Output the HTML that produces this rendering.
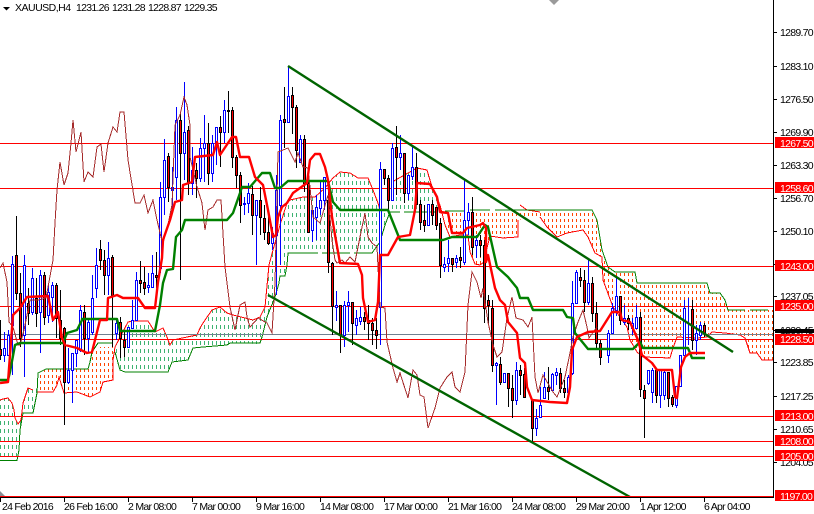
<!DOCTYPE html>
<html><head><meta charset="utf-8"><title>XAUUSD,H4</title>
<style>
html,body{margin:0;padding:0;background:#fff;width:814px;height:514px;overflow:hidden}
svg{display:block}
text{font-family:"Liberation Sans",sans-serif;font-size:10.5px;letter-spacing:-.72px;fill:#000}
.w{fill:#fff}
</style></head><body>
<svg width="814" height="514" viewBox="0 0 814 514" xmlns="http://www.w3.org/2000/svg">
<defs>
<pattern id="hg" patternUnits="userSpaceOnUse" width="4" height="8"><rect x="0" y="5" width="1" height="3" fill="#3cb371" shape-rendering="crispEdges"/><rect x="0" y="0" width="1" height="1" fill="#3cb371" shape-rendering="crispEdges"/></pattern>
<pattern id="ho" patternUnits="userSpaceOnUse" width="4" height="6"><rect x="0" y="3" width="1" height="3" fill="#ff4500" shape-rendering="crispEdges"/></pattern>
</defs>
<rect width="814" height="514" fill="#fff"/>

<!-- cloud hatch -->
<g fill="url(#hg)" shape-rendering="crispEdges">
<polygon points="0,400 3,399 8,398 12,403 14,410 15,418 18,424 21,420 23,413 20,430 19,450 17,460 0,460"/>
<polygon points="23,403 28,388 33,390 37,385 38,373 37,393 33,413 23,413"/>
<polygon points="115,347 128,322 133,321 148,321 155,332 163,328 167,337 170,345 173,340 187,337 197,335 200,328 203,323 212,310 220,307 227,313 233,315 253,320 260,317 265,307 269,265 273,250 280,225 287,203 290,200 303,197 315,197 325,188 333,178 340,172 350,173 358,178 368,178 373,190 378,203 381,213 388,212 380,242 372,253 288,253 287,265 285,276 280,276 279,283 275,297 267,317 262,337 260,344 230,343 227,345 203,347 193,348 188,360 172,362 168,372 125,372 120,370 115,352"/>
<polygon points="392,182 417,168 427,170 433,190 440,205 445,212 390,212"/>
</g>
<g fill="url(#ho)" shape-rendering="crispEdges">
<polygon points="38,373 46,369 88,369 90,362 92,352 98,347 113,347 114,380 103,382 100,392 90,397 77,392 64,393 59,377 57,385 53,392 37,392"/>
<polygon points="445,211 592,210 597,220 602,250 608,267 615,272 635,272 637,283 707,283 710,293 720,293 725,300 728,310 773,310 773,360 762,360 757,353 750,353 745,338 740,335 725,333 712,332 707,337 697,338 677,337 673,348 670,358 643,357 637,352 630,340 627,327 613,307 603,280 602,257 595,253 588,237 583,230 567,233 557,237 547,227 540,217 518,220 518,237 503,238 490,236 487,248 484,262 480,265 475,264 470,252 468,235 460,235 450,237"/>
</g>
<!-- senkou edges -->
<g fill="none" stroke="#ff0000" stroke-width="1" shape-rendering="crispEdges">
<path d="M0 400L3 399 8 398 12 403 14 410 15 418 18 424 21 420 23 403 28 388 33 390"/>
<path d="M37 392H53L57 385 59 377 64 393 77 392 90 397 100 392 103 382 113 380 113 360 115 347 128 322 133 321 148 321 155 332 163 328 167 337 170 345 173 340 187 337 197 335 200 328 203 323 212 310 220 307 227 313 233 315 253 320 260 317 265 307 269 265 273 250 280 225 287 203 290 200 303 197 315 197 325 188 333 178 340 172 350 173 358 178 368 178 373 190 378 203 381 213"/>
<path d="M392 182L417 168 427 170 433 190 440 205 445 225 450 237 460 235 468 235 470 252 475 264 480 265 484 262 487 248 490 236 503 238 518 237 518 220M520 205L527 210 540 212M540 217L547 227 557 237 567 233 583 230 588 237 595 253 602 257 603 280 613 307 627 327 630 340 637 352 643 357 670 358 673 348 677 337 697 338 707 337 712 332 725 333 740 335 745 338 750 353 757 353 762 360 773 360"/>
</g>
<g fill="none" stroke="#008000" stroke-width="1" shape-rendering="crispEdges">
<path d="M0 460.5H17L19 450 20 430 23 413H33L37 393 38 373 46 369H88L90 362 92 352 98 343H113"/>
<path d="M115 352L120 370 125 372H168L172 362 188 360 193 348 203 347 227 345 230 343H260L262 337 267 317 275 297 279 283 280 276H285L287 265 288 253H318M322 253H350M354 253H372L380 242 385 225 390 212H400M404 212H437"/>
<path d="M445 211H465M470 210H490M495 210H592L597 220 602 250 608 267 615 272H635L637 283H707L710 293H720L725 300 728 310H745M750 310H768"/>
</g>

<!-- horizontal lines -->
<g stroke="#ff0000" stroke-width="1" shape-rendering="crispEdges">
<path d="M0 143.5H773M0 188.5H773M0 266.5H773M0 306.5H773M0 339.5H773M0 416.5H773M0 441.5H773M0 456.5H773"/>
</g>
<path d="M0 334.5H773" stroke="#708090" stroke-width="1" shape-rendering="crispEdges"/>

<!-- candles -->
<g shape-rendering="crispEdges" fill="none" stroke-width="1">
<path stroke="#0000ff" d="M4.5 332V362M8.5 330V355M12.5 256V375M24.5 255V377M32.5 268V315M40.5 270V353M48.5 283V323M52.5 282V322M68.5 348V384M72.5 353V403M76.5 340V367M80.5 305V352M88.5 320V352M92.5 275V335M96.5 248V298M108.5 242V295M116.5 318V340M128.5 327V348M132.5 300V329M136.5 272V320M148.5 273V293M152.5 255V288M160.5 182V273M164.5 139V215M172.5 167V210M176.5 107V200M184.5 82V180M192.5 147V195M200.5 138V182M204.5 115V182M212.5 135V182M216.5 127V165M224.5 100V143M244.5 197V215M248.5 183V213M256.5 200V265M272.5 227V250M276.5 175V295M280.5 115V265M288.5 67V122M300.5 135V162M312.5 210V242M316.5 195V240M320.5 180V215M324.5 177V210M336.5 291V321M344.5 301V347M348.5 291V332M356.5 310V335M360.5 307V325M380.5 162V345M392.5 143V200M400.5 135V170M408.5 175V200M412.5 147V180M428.5 204V225M444.5 257V272M448.5 240V272M456.5 255V268M464.5 180V265M468.5 203V235M476.5 235V258M496.5 362V405M504.5 373V382M516.5 362V405M536.5 409V436M540.5 387V417M544.5 372V398M552.5 373V390M556.5 368V385M568.5 375V395M572.5 281V375M576.5 270V303M588.5 260V305M608.5 330V363M612.5 303V333M616.5 277V316M624.5 305V325M632.5 318V335M636.5 305V328M648.5 370V385M652.5 368V403M660.5 370V408M664.5 370V400M676.5 386V408M680.5 355V386M684.5 300V355M688.5 298V345M696.5 325V355M700.5 322V340"/>
<path stroke="#0000ff" fill="#fff" d="M3.5 348.5h2V355.5h-2zM7.5 335.5h2V355.5h-2zM11.5 264.5h2V325.5h-2zM23.5 265.5h2V335.5h-2zM31.5 278.5h2V312.5h-2zM39.5 275.5h2V312.5h-2zM47.5 292.5h2V315.5h-2zM51.5 285.5h2V297.5h-2zM67.5 370.5h2V382.5h-2zM71.5 353.5h2V370.5h-2zM75.5 340.5h2V353.5h-2zM79.5 310.5h2V350.5h-2zM87.5 322.5h2V338.5h-2zM91.5 298.5h2V332.5h-2zM95.5 265.5h2V288.5h-2zM107.5 258.5h2V275.5h-2zM115.5 323.5h2V333.5h-2zM127.5 327.5h2V347.5h-2zM131.5 320.5h2V328.5h-2zM135.5 280.5h2V320.5h-2zM147.5 285.5h2V287.5h-2zM151.5 273.5h2V287.5h-2zM159.5 197.5h2V268.5h-2zM163.5 160.5h2V197.5h-2zM171.5 187.5h2V190.5h-2zM175.5 120.5h2V177.5h-2zM183.5 132.5h2V153.5h-2zM191.5 170.5h2V183.5h-2zM199.5 148.5h2V178.5h-2zM203.5 143.5h2V148.5h-2zM211.5 143.5h2V173.5h-2zM215.5 127.5h2V143.5h-2zM223.5 110.5h2V132.5h-2zM243.5 203.5h2V204.5h-2zM247.5 193.5h2V203.5h-2zM255.5 200.5h2V215.5h-2zM271.5 233.5h2V243.5h-2zM275.5 190.5h2V235.5h-2zM279.5 120.5h2V205.5h-2zM287.5 96.5h2V122.5h-2zM299.5 139.5h2V162.5h-2zM311.5 210.5h2V230.5h-2zM315.5 207.5h2V217.5h-2zM319.5 200.5h2V208.5h-2zM323.5 177.5h2V200.5h-2zM335.5 305.5h2V307.5h-2zM343.5 305.5h2V335.5h-2zM347.5 302.5h2V305.5h-2zM355.5 318.5h2V325.5h-2zM359.5 317.5h2V321.5h-2zM379.5 169.5h2V307.5h-2zM391.5 148.5h2V200.5h-2zM399.5 153.5h2V157.5h-2zM407.5 175.5h2V193.5h-2zM411.5 167.5h2V176.5h-2zM427.5 204.5h2V225.5h-2zM443.5 264.5h2V267.5h-2zM447.5 258.5h2V263.5h-2zM455.5 258.5h2V262.5h-2zM463.5 220.5h2V262.5h-2zM467.5 212.5h2V220.5h-2zM475.5 240.5h2V245.5h-2zM495.5 363.5h2V365.5h-2zM503.5 373.5h2V382.5h-2zM515.5 370.5h2V400.5h-2zM535.5 418.5h2V428.5h-2zM539.5 405.5h2V417.5h-2zM543.5 387.5h2V398.5h-2zM551.5 374.5h2V390.5h-2zM555.5 372.5h2V375.5h-2zM567.5 377.5h2V392.5h-2zM571.5 303.5h2V373.5h-2zM575.5 272.5h2V303.5h-2zM587.5 283.5h2V302.5h-2zM607.5 333.5h2V355.5h-2zM611.5 308.5h2V333.5h-2zM615.5 296.5h2V310.5h-2zM623.5 318.5h2V322.5h-2zM631.5 323.5h2V328.5h-2zM635.5 317.5h2V328.5h-2zM647.5 370.5h2V383.5h-2zM651.5 370.5h2V392.5h-2zM659.5 370.5h2V395.5h-2zM663.5 372.5h2V395.5h-2zM675.5 386.5h2V405.5h-2zM679.5 355.5h2V386.5h-2zM683.5 308.5h2V355.5h-2zM695.5 333.5h2V340.5h-2zM699.5 325.5h2V335.5h-2z"/>
<path stroke="#000" d="M0.5 320V360M16.5 216V300M20.5 273V347M28.5 288V325M36.5 278V327M44.5 272V325M56.5 283V338M60.5 290V345M64.5 327V425M84.5 305V355M100.5 240V270M104.5 250V295M112.5 255V347M120.5 317V358M124.5 330V357M140.5 261V293M144.5 267V295M156.5 252V288M168.5 153V202M180.5 112V280M188.5 126V195M196.5 163V198M208.5 123V185M220.5 116V167M228.5 91V133M232.5 107V168M236.5 155V188M240.5 172V223M252.5 186V235M260.5 187V235M264.5 205V240M268.5 215V245M284.5 87V148M292.5 87V134M296.5 105V168M304.5 135V192M308.5 180V232M328.5 185V273M332.5 262V335M340.5 305V353M352.5 302V345M364.5 312V330M368.5 305V340M372.5 318V345M376.5 318V349M384.5 169V185M388.5 175V210M396.5 126V195M404.5 153V203M416.5 153V205M420.5 200V230M424.5 205V232M432.5 200V225M436.5 207V230M440.5 218V278M452.5 258V272M460.5 247V268M472.5 197V255M480.5 235V257M484.5 240V323M488.5 295V325M492.5 300V372M500.5 357V385M508.5 373V407M512.5 375V418M520.5 365V395M524.5 368V397M532.5 400V442M548.5 367V400M560.5 368V393M564.5 380V398M580.5 268V287M584.5 270V312M592.5 277V322M596.5 302V350M600.5 340V365M620.5 296V325M628.5 315V330M640.5 312V397M644.5 385V438M656.5 370V403M668.5 372V407M672.5 395V407M692.5 300V350M704.5 323V337"/>
<path stroke="#000" fill="#ff0000" d="M-0.5 349.5h2V355.5h-2zM15.5 255.5h2V293.5h-2zM19.5 293.5h2V338.5h-2zM27.5 303.5h2V313.5h-2zM35.5 298.5h2V313.5h-2zM43.5 275.5h2V317.5h-2zM55.5 285.5h2V318.5h-2zM59.5 320.5h2V338.5h-2zM63.5 328.5h2V382.5h-2zM83.5 312.5h2V338.5h-2zM99.5 249.5h2V260.5h-2zM103.5 260.5h2V275.5h-2zM111.5 257.5h2V295.5h-2zM119.5 322.5h2V338.5h-2zM123.5 340.5h2V347.5h-2zM139.5 280.5h2V283.5h-2zM143.5 282.5h2V288.5h-2zM155.5 275.5h2V277.5h-2zM167.5 156.5h2V187.5h-2zM179.5 120.5h2V153.5h-2zM187.5 130.5h2V182.5h-2zM195.5 170.5h2V178.5h-2zM207.5 143.5h2V173.5h-2zM219.5 127.5h2V132.5h-2zM227.5 110.5h2V111.5h-2zM231.5 110.5h2V157.5h-2zM235.5 157.5h2V175.5h-2zM239.5 175.5h2V205.5h-2zM251.5 194.5h2V215.5h-2zM259.5 200.5h2V217.5h-2zM263.5 218.5h2V232.5h-2zM267.5 232.5h2V243.5h-2zM283.5 119.5h2V122.5h-2zM291.5 95.5h2V107.5h-2zM295.5 107.5h2V150.5h-2zM303.5 139.5h2V183.5h-2zM307.5 183.5h2V232.5h-2zM327.5 200.5h2V262.5h-2zM331.5 263.5h2V306.5h-2zM339.5 305.5h2V335.5h-2zM351.5 302.5h2V323.5h-2zM363.5 317.5h2V321.5h-2zM367.5 320.5h2V323.5h-2zM371.5 323.5h2V330.5h-2zM375.5 330.5h2V335.5h-2zM383.5 169.5h2V178.5h-2zM387.5 178.5h2V200.5h-2zM395.5 147.5h2V157.5h-2zM403.5 153.5h2V193.5h-2zM415.5 167.5h2V204.5h-2zM419.5 204.5h2V222.5h-2zM423.5 220.5h2V225.5h-2zM431.5 204.5h2V215.5h-2zM435.5 207.5h2V225.5h-2zM439.5 223.5h2V265.5h-2zM451.5 258.5h2V264.5h-2zM459.5 257.5h2V260.5h-2zM471.5 212.5h2V247.5h-2zM479.5 240.5h2V245.5h-2zM483.5 245.5h2V308.5h-2zM487.5 300.5h2V305.5h-2zM491.5 308.5h2V365.5h-2zM499.5 364.5h2V382.5h-2zM507.5 373.5h2V388.5h-2zM511.5 388.5h2V400.5h-2zM519.5 370.5h2V375.5h-2zM523.5 374.5h2V397.5h-2zM531.5 400.5h2V428.5h-2zM547.5 387.5h2V391.5h-2zM559.5 373.5h2V388.5h-2zM563.5 388.5h2V392.5h-2zM579.5 277.5h2V280.5h-2zM583.5 280.5h2V302.5h-2zM591.5 283.5h2V313.5h-2zM595.5 313.5h2V343.5h-2zM599.5 343.5h2V357.5h-2zM619.5 296.5h2V320.5h-2zM627.5 318.5h2V323.5h-2zM639.5 317.5h2V389.5h-2zM643.5 390.5h2V398.5h-2zM655.5 370.5h2V395.5h-2zM667.5 372.5h2V398.5h-2zM671.5 397.5h2V404.5h-2zM691.5 309.5h2V340.5h-2zM703.5 325.5h2V333.5h-2z"/>
</g>

<!-- chikou -->
<polyline fill="none" stroke="#a52a2a" stroke-width="1" shape-rendering="crispEdges" points="0,268 3,263 7,282 9,322 13,327 18,345 20,345 24,330 30,300 38,300 46,298 53,260 55,223 57,190 60,162 64,185 68,173 71,143 73,120 76,152 81,132 84,182 88,172 93,177 97,147 101,144 104,172 108,143 113,127 117,132 120,112 124,112 128,160 135,203 140,203 144,195 148,213 153,200 157,220 161,237 163,243 168,225 172,205 175,125 180,115 184,97 187,105 190,125 190,157 197,187 202,203 205,230 208,210 213,207 217,200 221,200 225,267 230,307 235,330 240,305 245,302 247,317 250,327 258,318 267,323 272,333 275,283 278,152 288,148 295,162 298,153 303,167 308,168 313,217 320,223 328,195 332,240 335,260 337,263 342,260 345,263 350,257 355,262 360,237 365,213 368,237 372,243 377,247 380,307 385,308 387,342 393,368 397,382 400,373 408,398 413,370 417,375 420,395 424,397 428,428 435,408 440,388 447,377 452,372 455,387 460,392 465,372 468,305 472,272 477,282 481,298 483,288 488,322 493,345 497,357 502,352 507,318 512,297 516,318 523,320 528,327 532,317 535,377 538,393 543,375 553,392 557,397 565,377 570,353 573,337 578,322 583,310 587,327 589,338 597,327"/>

<!-- kijun -->
<polyline fill="none" stroke="#008000" stroke-width="2.4" stroke-linejoin="round" points="0,380 8,380 10,372 15,345 20,343 63,343 67,333 77,330 82,320 82,319 117,319 120,331 155,331 160,305 163,283 167,270 173,269 176,237 182,230 185,220 227,220 233,213 240,193 242,187 250,187 262,173 270,173 275,188 280,188 288,181 328,181 333,202 340,210 388,210 400,240 443,240 452,237 477,237 485,225 488,227 497,267 508,277 517,288 520,298 528,298 533,310 563,310 567,317 573,318 575,333 588,349 633,349 640,342 643,348 688,348 692,358 705,358"/>
<!-- tenkan -->
<polyline fill="none" stroke="#ff0000" stroke-width="2.4" stroke-linejoin="round" points="0,383 8,382 10,355 13,315 20,308 27,297 48,296 53,320 58,312 62,338 65,345 77,348 87,353 92,352 100,320 107,320 108,298 117,295 123,298 138,298 145,308 155,308 158,282 162,258 163,240 170,220 175,202 182,200 183,185 192,182 195,157 213,155 217,142 220,155 232,137 236,137 240,157 249,157 255,177 263,185 268,210 273,237 276,235 278,217 282,207 287,203 293,193 300,188 307,183 310,160 315,154 320,154 325,167 328,180 332,217 335,235 340,263 358,264 362,275 363,298 368,322 375,320 378,302 380,255 388,255 398,237 410,235 415,210 417,183 430,184 437,197 440,212 448,213 452,233 463,233 467,228 480,225 483,223 486,228 486,262 488,255 495,288 500,300 505,305 508,322 517,333 520,358 525,363 527,387 532,400 550,402 567,403 570,387 572,350 577,337 588,332 600,331 612,312 620,312 622,320 630,322 638,340 642,355 652,363 657,370 672,370 675,397 677,398 681,367 685,357 690,353 705,353"/>

<!-- trend lines -->
<g stroke="#006400" stroke-width="2.4" fill="none">
<path d="M288 66L733 352"/>
<path d="M268 295L630 497"/>
</g>

<!-- misc triangles -->
<path d="M549 0h10l-5 5z" fill="#9a9a9a"/>
<path d="M0 491l6 6H0z" fill="#8a8f96"/>

<!-- title -->
<path d="M3 7h7l-3.5 3.5z" fill="#000"/>
<text x="15" y="11" style="letter-spacing:-.5px">XAUUSD,H4</text>
<text x="76" y="11">1231.26</text>
<text x="112" y="11">1231.28</text>
<text x="148" y="11">1228.87</text>
<text x="184" y="11">1229.35</text>

<!-- axes -->
<g shape-rendering="crispEdges">
<rect x="773" y="0" width="1" height="497" fill="#000"/>
<rect x="0" y="496" width="773" height="1" fill="#ff0000"/>
<rect x="0" y="497" width="774" height="1" fill="#000"/>
<path stroke="#000" d="M774 32.5h3M774 66.5h3M774 99.5h3M774 132.5h3M774 165.5h3M774 198.5h3M774 231.5h3M774 264.5h3M774 296.5h3M774 330.5h3M774 362.5h3M774 396.5h3M774 429.5h3M774 462.5h3M0.5 498v4M64.5 498v4M128.5 498v4M192.5 498v4M256.5 498v4M320.5 498v4M384.5 498v4M448.5 498v4M512.5 498v4M576.5 498v4M640.5 498v4M704.5 498v4"/>
</g>
<text x="780" y="36">1289.70</text>
<text x="780" y="70">1283.10</text>
<text x="780" y="103">1276.50</text>
<text x="780" y="136">1269.90</text>
<text x="780" y="169">1263.30</text>
<text x="780" y="202">1256.70</text>
<text x="780" y="235">1250.10</text>
<text x="780" y="300">1237.05</text>
<text x="780" y="334">1230.45</text>
<text x="780" y="366">1223.85</text>
<text x="780" y="400">1217.25</text>
<text x="780" y="433">1210.65</text>
<text x="780" y="466">1204.05</text>

<rect x="775" y="329" width="39" height="4" fill="#000"/>
<g fill="#ff0000" shape-rendering="crispEdges">
<rect x="775" y="137" width="39" height="11"/>
<rect x="775" y="182" width="39" height="11"/>
<rect x="775" y="260" width="39" height="11"/>
<rect x="775" y="300" width="39" height="11"/>
<rect x="775" y="334" width="39" height="11"/>
<rect x="775" y="410" width="39" height="11"/>
<rect x="775" y="435" width="39" height="11"/>
<rect x="775" y="450" width="39" height="11"/>
<rect x="775" y="490" width="39" height="11"/>
</g>
<text class="w" x="780" y="147">1267.50</text>
<text class="w" x="780" y="192">1258.60</text>
<text class="w" x="780" y="270">1243.00</text>
<text class="w" x="780" y="310">1235.00</text>
<text class="w" x="780" y="343">1228.50</text>
<text class="w" x="780" y="420">1213.00</text>
<text class="w" x="780" y="445">1208.00</text>
<text class="w" x="780" y="460">1205.00</text>
<text class="w" x="780" y="500">1197.00</text>

<text x="2" y="510">24 Feb 2016</text>
<text x="64" y="510">26 Feb 16:00</text>
<text x="128" y="510">2 Mar 08:00</text>
<text x="192" y="510">7 Mar 00:00</text>
<text x="256" y="510">9 Mar 16:00</text>
<text x="320" y="510">14 Mar 08:00</text>
<text x="384" y="510">17 Mar 00:00</text>
<text x="448" y="510">21 Mar 16:00</text>
<text x="512" y="510">24 Mar 08:00</text>
<text x="576" y="510">29 Mar 20:00</text>
<text x="640" y="510">1 Apr 12:00</text>
<text x="704" y="510">6 Apr 04:00</text>
</svg>
</body></html>
